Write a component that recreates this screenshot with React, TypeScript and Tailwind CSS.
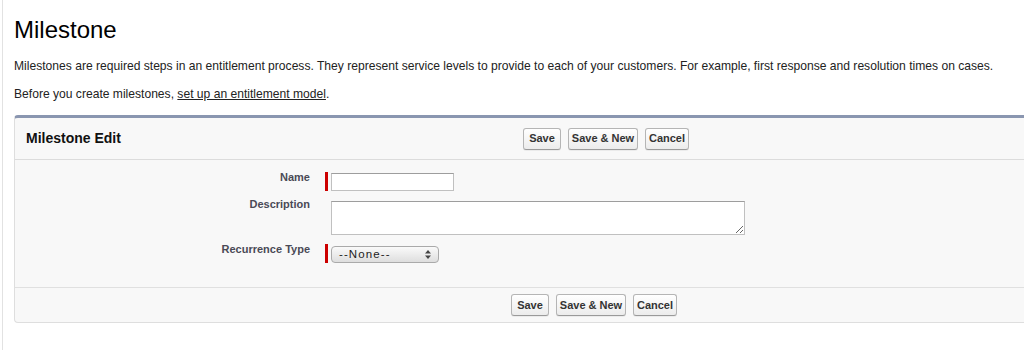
import React from "react";

function Btn({ children, w }: { children: React.ReactNode; w: string }) {
  return (
    <button
      className={`${w} h-[22px] rounded-[3px] border border-[#b5b5b5] border-b-[#9a9a9a] bg-gradient-to-b from-[#ffffff] to-[#ececec] text-[11px] font-bold text-[#333] leading-none shadow-[0_1px_0_rgba(0,0,0,0.05)] flex items-center justify-center`}
    >
      {children}
    </button>
  );
}

function Buttons() {
  return (
    <div className="flex gap-[7px]">
      <Btn w="w-[38px]">Save</Btn>
      <Btn w="w-[70px]">Save &amp; New</Btn>
      <Btn w="w-[44px]">Cancel</Btn>
    </div>
  );
}

function ReqBar() {
  return <div className="w-[3px] h-[19px] bg-[#c00] shrink-0" />;
}

export default function App() {
  return (
    <div className="relative w-[1024px] h-[350px] overflow-hidden bg-white font-['Liberation_Sans',Arial,sans-serif]">
      <div className="absolute left-[2px] top-0 bottom-0 w-px bg-[#e2e2e2]" />
      <div className="pl-[14px] pt-[15px]">
        <h1 className="text-[24px] leading-[30px] text-black font-normal">Milestone</h1>
        <p className="mt-[14px] text-[12.1px] leading-[14px] text-[#222]">
          Milestones are required steps in an entitlement process. They represent service levels to provide to each of your customers. For example, first response and resolution times on cases.
        </p>
        <p className="mt-[14px] text-[12.1px] leading-[14px] text-[#222]">
          Before you create milestones, <span className="underline">set up an entitlement model</span>.
        </p>
        <div className="mt-[14px] w-[1030px] border-t-[3px] border-t-[#8a96b0] border-l border-b border-[#dedede] rounded-[4px] bg-[#f8f8f8]">
          <div className="flex items-center h-[42px] border-b border-[#dcdcdc]">
            <div className="pl-[11px] w-[508px] text-[14px] font-bold text-[#111]">Milestone Edit</div>
            <Buttons />
          </div>
          <div className="pt-[12px] pb-[24px] border-b border-[#e0e0e0]">
            <div className="flex items-start h-[29px]">
              <div className="w-[295px] text-right -mt-[1px] text-[11px] leading-[13px] font-bold text-[#4a4a56]">Name</div>
              <div className="ml-[15px] flex items-start">
                <ReqBar />
                <input className="ml-[3px] mt-[1px] w-[123px] h-[18px] bg-white border border-[#c0c0c0] border-t-[#9d9d9d] outline-none" />
              </div>
            </div>
            <div className="flex items-start h-[43px]">
              <div className="w-[295px] text-right -mt-[3px] text-[11px] leading-[13px] font-bold text-[#4a4a56]">Description</div>
              <div className="ml-[21px] flex">
                <textarea className="block w-[414px] h-[34px] bg-white border border-[#c0c0c0] border-t-[#9d9d9d] outline-none resize" />
              </div>
            </div>
            <div className="flex items-start h-[19px]">
              <div className="w-[295px] text-right -mt-[1px] text-[11px] leading-[13px] font-bold text-[#4a4a56]">Recurrence Type</div>
              <div className="ml-[15px] flex items-start">
                <ReqBar />
                <div className="ml-[3px] mt-[2px] w-[108px] h-[17px] rounded-[4px] border border-[#aaa] bg-gradient-to-b from-[#fafafa] to-[#dedede] flex items-center justify-between pl-[7px] pr-[7px] text-[11.5px] tracking-[1.1px] text-[#222]">
                  <span>--None--</span>
                  <svg width="6" height="9" viewBox="0 0 6 9">
                    <path d="M0 3.5 L3 0 L6 3.5 Z" fill="#444" />
                    <path d="M0 5.5 L3 9 L6 5.5 Z" fill="#444" />
                  </svg>
                </div>
              </div>
            </div>
          </div>
          <div className="flex items-center h-[34px]">
            <div className="w-[496px]" />
            <Buttons />
          </div>
        </div>
      </div>
    </div>
  );
}
